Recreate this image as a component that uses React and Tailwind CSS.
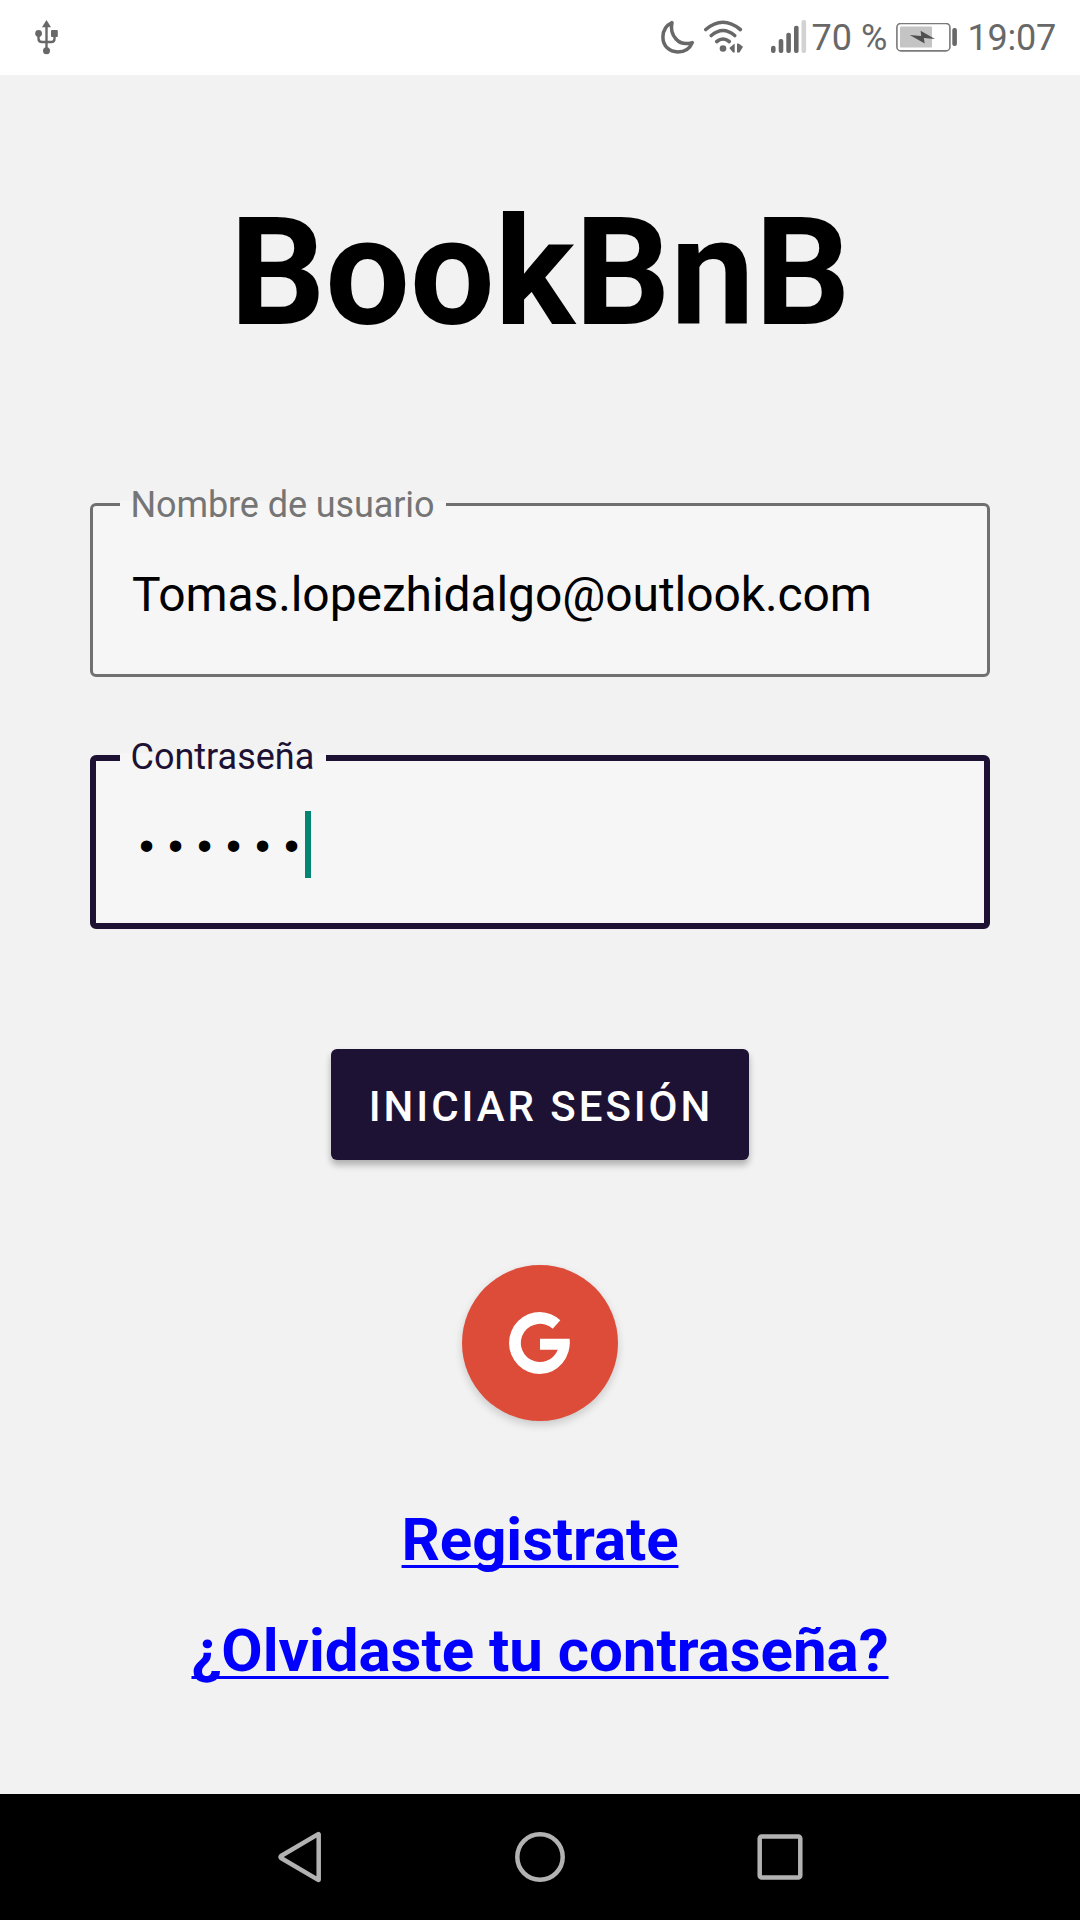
function UsbIcon() {
  return (
    <svg className="ml-[34px] h-[36px] w-[26px]" viewBox="0 0 26 36" fill="none" stroke="#686868" strokeWidth="2.4">
      <path d="M12.5 6v24M4.5 14v4.5q0 3.5 3.5 3.5h9.500q3 0 3-3.500V14" />
      <g fill="#686868" stroke="none">
        <path d="M12.500 0l4.500 7.200h-9z" />
        <circle cx="4.600" cy="13.500" r="3.400" />
        <rect x="17" y="10" width="6.800" height="7" rx="1" />
        <circle cx="12.500" cy="30.700" r="3.500" />
      </g>
    </svg>
  );
}

function MoonIcon() {
  return (
    <svg className="h-[36px] w-[36px]" viewBox="0 0 36 36" fill="none" stroke="#686868" strokeWidth="3.5" strokeLinejoin="round">
      <path d="M12 2.600C6 5.500 2.900 10.500 2.900 17c0 9 6.500 14.900 15 14.900 7 0 12-3.500 14.400-9.300C26 24.500 20 23.500 16 19c-4-4.500-5.500-9.900-4-16.400z" />
    </svg>
  );
}

function WifiIcon() {
  return (
    <svg className="ml-[7px] h-[36px] w-[42px]" viewBox="0 0 42 36" fill="none" stroke="#686868" strokeWidth="3.600" strokeLinecap="round">
      <path d="M2.800 9.500q17-14.500 34.500 0M8.300 15.500q11.700-10 23.400 0M13.800 21.500q6.200-5 12.400 0" />
      <g fill="#686868" stroke="none">
        <circle cx="20" cy="28.500" r="3.300" />
        <path d="M31.700 23.500v9H30l-3.700-4.500zM34 23.500l2 .3 4 3-3.500 5.700H34z" />
      </g>
    </svg>
  );
}

function SignalIcon() {
  return (
    <svg className="ml-[24px] h-[36px] w-[38px]" viewBox="0 -0.5 38 36" fill="#686868">
      <rect x="2" y="25.300" width="4.600" height="7.200" rx="2.200" />
      <rect x="9.700" y="18.500" width="4.600" height="14" rx="2" />
      <rect x="17.300" y="12.200" width="4.600" height="20.300" rx="2" />
      <rect x="25" y="5.300" width="4.600" height="27.200" rx="2" />
      <rect x="32.500" y="-0.500" width="4.600" height="33" rx="2" fill="#d2d2d2" />
    </svg>
  );
}

function BatteryIcon() {
  return (
    <svg className="h-[30px] w-[62px]" viewBox="0 0.5 62 30" fill="none">
      <rect x="0.900" y="0.900" width="53" height="27.500" rx="4" stroke="#7a7a7a" strokeWidth="1.600" />
      <rect x="4" y="4" width="32" height="21" rx="1" fill="#c4c4c4" />
      <rect x="56.300" y="5.500" width="4.600" height="18" rx="2" fill="#686868" />
      <path d="M13.700 12.500l11.500 1-.6-5.300L39 16.500l-11.200-1 .9 5.500z" fill="#4f4f4f" />
    </svg>
  );
}

function StatusBar() {
  return (
    <header className="flex h-[75px] items-center bg-white text-[36px] leading-none text-[#686868]">
      <UsbIcon />
      <div className="ml-auto flex items-center pr-[22px]">
        <MoonIcon />
        <WifiIcon />
        <SignalIcon />
        <span className="ml-[5px] w-[84px] whitespace-nowrap">70 %</span>
        <BatteryIcon />
        <span className="ml-[10px] w-[90.500px] tracking-[-0.200px]">19:07</span>
      </div>
    </header>
  );
}

function Field({ label, labelClass, boxClass, children }) {
  return (
    <div className="relative h-[174px] w-[900px]">
      <div className={`flex h-full items-center rounded-[6px] bg-[#f6f6f6] ${boxClass}`}>{children}</div>
      <label className={`absolute -top-[2px] left-[30px] flex h-[8px] items-center bg-[#f6f6f6] pl-[10.500px] text-[36px] whitespace-nowrap ${labelClass}`}>
        {label}
      </label>
    </div>
  );
}

function NavBar() {
  return (
    <nav className="flex h-[126px] items-center justify-center gap-[180px] bg-black">
      <svg className="h-[60px] w-[60px]" viewBox="0 0 60 60" fill="none" stroke="#b2b2b2" strokeWidth="4.500" strokeLinejoin="round">
        <path d="M48.700 7.300v45.400q0 .5-.5.200L11 31q-1-1 0-2L48.200 7.100q.5-.3.500.2z" />
      </svg>
      <svg className="h-[60px] w-[60px]" viewBox="0 0 60 60" fill="none" stroke="#b2b2b2" strokeWidth="4.500">
        <circle cx="30" cy="30" r="22.700" />
      </svg>
      <svg className="h-[60px] w-[60px]" viewBox="0 0 60 60" fill="none" stroke="#b2b2b2" strokeWidth="4.500">
        <rect x="9.700" y="9.500" width="40.600" height="41" rx="2" />
      </svg>
    </nav>
  );
}

export default function App() {
  return (
    <div className="flex h-[1920px] w-[1080px] flex-col overflow-hidden bg-[#f2f2f2] font-['Roboto',sans-serif]">
      <StatusBar />
      <main className="flex flex-1 flex-col items-center pt-[110px]">
        <h1 className="h-[176px] text-[150px] leading-[176px] font-bold text-black">BookBnB</h1>
        <div className="mt-[142px] flex flex-col gap-[78px]">
          <Field label="Nombre de usuario" labelClass="w-[326px] text-[#757575] tracking-[-0.1px]" boxClass="border-[3px] border-[#707070] pl-[39px] pt-[9px]">
            <span className="text-[48px] leading-[56px] tracking-[-0.090px] text-black">Tomas.lopezhidalgo@outlook.com</span>
          </Field>
          <Field label="Contraseña" labelClass="w-[206px] text-[#1e1234]" boxClass="border-[6px] border-[#1e1234] pl-[36px] pt-[5px]">
            <span className="w-[173px] pt-[9px] pl-[2px] font-['Liberation_Mono',monospace] text-[42px] leading-[56px] tracking-[3.800px] text-black">••••••</span>
            <span className="h-[67px] w-[6px] bg-[#038573]" />
          </Field>
        </div>
        <button className="mt-[120px] flex h-[111px] w-[418px] items-center justify-center rounded-[6px] bg-[#1e1234] pt-[4px] pl-[2px] text-[42px] leading-none font-medium tracking-[2.950px] text-white shadow-[0_5px_7px_rgba(0,0,0,0.28)]">
          INICIAR SESIÓN
        </button>
        <button className="mt-[105px] flex size-[156px] items-center justify-center rounded-full bg-[#dd4b39] shadow-[0_4px_9px_rgba(0,0,0,0.17)]">
          <svg className="h-[62px] w-[62px]" viewBox="0 0 62 62" fill="white">
            <path d="M51.300 8.300L43.700 16.700A19.100 19.100 0 1 0 48.800 37.700H31V26.700H60.600A30 31.500 0 0 1 31 62A31 31 0 0 1 0 31A31 31 0 0 1 31 0A31 31 0 0 1 51.300 8.300z" />
          </svg>
        </button>
        <a className="mt-[84px] text-[60px] leading-[70px] font-bold tracking-[-0.100px] text-[#0000fc] underline decoration-[3px] underline-offset-[5px] [text-decoration-skip-ink:none]">
          Registrate
        </a>
        <a className="mt-[41px] text-[60px] leading-[70px] font-bold tracking-[-0.020px] text-[#0000fc] underline decoration-[3px] underline-offset-[5px] [text-decoration-skip-ink:none]">
          ¿Olvidaste tu contraseña?
        </a>
      </main>
      <NavBar />
    </div>
  );
}
